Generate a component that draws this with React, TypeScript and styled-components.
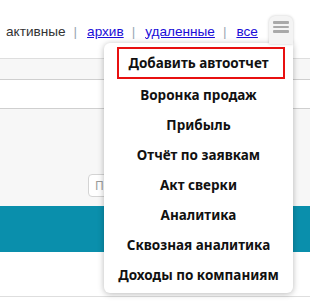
import React from "react";
import styled, { createGlobalStyle } from "styled-components";

const GlobalStyle = createGlobalStyle`
  html, body {
    margin: 0;
    padding: 0;
    background: #fff;
    font-family: "Noto Sans", "Open Sans", Arial, sans-serif;
  }
`;

const SPage = styled.div`
  position: relative;
  width: 310px;
  height: 304px;
  overflow: hidden;
`;

const SHeader = styled.div`
  height: 59px;
  border-bottom: 1px solid #dedede;
  display: flex;
  align-items: flex-start;
  padding: 16px 17px 0 6px;
  box-sizing: border-box;
`;

const STabs = styled.div`
  display: flex;
  align-items: center;
  height: 30px;
  font-family: "Liberation Sans", Arial, sans-serif;
  font-size: 13.6px;
  color: #333;
  white-space: nowrap;
`;

const SSep = styled.span`
  color: #9aa7b4;
  margin: 0 10px 0 8px;
`;

const SLink = styled.a`
  color: #1a0dd8;
  text-decoration: underline;
  cursor: pointer;
`;

const SBurger = styled.button`
  margin-left: auto;
  width: 24px;
  height: 28px;
  border: none;
  border-radius: 6px 6px 0 0;
  background: #f4f4f4;
  box-shadow: 0 0 3px rgba(0, 0, 0, 0.22);
  display: flex;
  flex-direction: column;
  justify-content: flex-start;
  align-items: center;
  gap: 2px;
  padding: 5px 0 0;
  position: relative;
  z-index: 3;
`;

const SBurgerLine = styled.span`
  width: 16px;
  height: 2.5px;
  border-radius: 1px;
  background: #a9a9a9;
`;

const SStrip = styled.div<{ h: number; bg: string; line?: string }>`
  height: ${({ h }) => h}px;
  background: ${({ bg }) => bg};
  border-bottom: ${({ line }) => (line ? `1px solid ${line}` : "none")};
`;

const SFilterBand = styled.div`
  height: 97px;
  background: #f7f7f7;
  display: flex;
  align-items: flex-end;
  padding: 0 0 9px 88px;
  box-sizing: border-box;
`;

const SSearch = styled.div`
  height: 23px;
  width: 200px;
  border: 1px solid #d4d4d4;
  border-radius: 4px;
  background: #fff;
  box-sizing: border-box;
  font-size: 12px;
  color: #9a9a9a;
  padding: 2px 0 0 6px;
`;

const SMenu = styled.div`
  position: absolute;
  top: 43px;
  left: 104px;
  width: 189px;
  background: #fff;
  border-radius: 6px 0 6px 6px;
  box-shadow: 0 1px 6px rgba(0, 0, 0, 0.28);
  padding: 4px 0 3px;
  box-sizing: border-box;
  z-index: 2;
`;

const SItem = styled.div<{ active?: boolean }>`
  height: ${({ active }) => (active ? 32 : 30)}px;
  margin: ${({ active }) => (active ? "0 8px 1px 13px" : "0")};
  border: ${({ active }) => (active ? "2px solid #e81010" : "none")};
  box-sizing: border-box;
  display: flex;
  align-items: center;
  justify-content: center;
  padding-right: ${({ active }) => (active ? 5 : 0)}px;
  font-size: 13.5px;
  font-weight: 700;
  color: #111;
  white-space: nowrap;
`;

const items = [
  "Воронка продаж",
  "Прибыль",
  "Отчёт по заявкам",
  "Акт сверки",
  "Аналитика",
  "Сквозная аналитика",
  "Доходы по компаниям",
];

export default function App() {
  return (
    <SPage>
      <GlobalStyle />
      <SHeader>
        <STabs>
          <span>активные</span>
          <SSep>|</SSep>
          <SLink>архив</SLink>
          <SSep>|</SSep>
          <SLink>удаленные</SLink>
          <SSep>|</SSep>
          <SLink>все</SLink>
        </STabs>
        <SBurger>
          <SBurgerLine />
          <SBurgerLine />
          <SBurgerLine />
        </SBurger>
      </SHeader>
      <SStrip h={20} bg="#f7f7f7" line="#cfcfcf" />
      <SStrip h={28} bg="#fff" line="#cfcfcf" />
      <SFilterBand>
        <SSearch>Поиск</SSearch>
      </SFilterBand>
      <SStrip h={46} bg="#0a8fac" />
      <SStrip h={44} bg="#fff" line="#dedede" />
      <SMenu>
        <SItem active>Добавить автоотчет</SItem>
        {items.map((t) => (
          <SItem key={t}>{t}</SItem>
        ))}
      </SMenu>
    </SPage>
  );
}
